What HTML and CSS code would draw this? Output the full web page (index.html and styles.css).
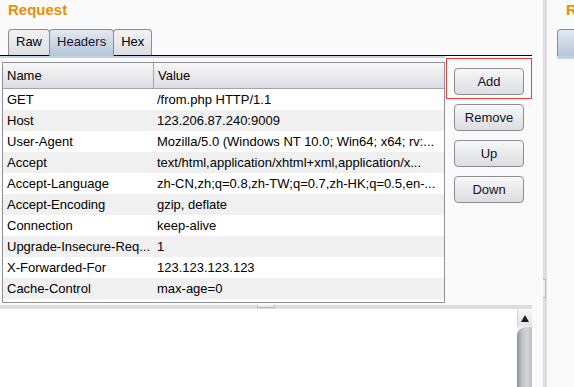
FILE: index.html
```html
<!DOCTYPE html>
<html lang="en">
<head>
    <meta charset="UTF-8">
    <title>Request headers</title>
    <link rel="stylesheet" href="styles.css">
</head>
<body>
    <div class="app">
        <section class="panel">
            <h2 class="panel-title">Request</h2>
            <div class="tabs">
                <span class="tab">Raw</span>
                <span class="tab active">Headers</span>
                <span class="tab">Hex</span>
            </div>
            <div class="tab-rule"></div>

            <div class="headers">
                <div class="grid">
                    <div class="grid-head"><span>Name</span><span>Value</span></div>
                    <div class="grid-row"><span>GET</span><span>/from.php HTTP/1.1</span></div>
                    <div class="grid-row"><span>Host</span><span>123.206.87.240:9009</span></div>
                    <div class="grid-row"><span>User-Agent</span><span>Mozilla/5.0 (Windows NT 10.0; Win64; x64; rv:...</span></div>
                    <div class="grid-row"><span>Accept</span><span>text/html,application/xhtml+xml,application/x...</span></div>
                    <div class="grid-row"><span>Accept-Language</span><span>zh-CN,zh;q=0.8,zh-TW;q=0.7,zh-HK;q=0.5,en-...</span></div>
                    <div class="grid-row"><span>Accept-Encoding</span><span>gzip, deflate</span></div>
                    <div class="grid-row"><span>Connection</span><span>keep-alive</span></div>
                    <div class="grid-row"><span>Upgrade-Insecure-Req...</span><span>1</span></div>
                    <div class="grid-row"><span>X-Forwarded-For</span><span>123.123.123.123</span></div>
                    <div class="grid-row"><span>Cache-Control</span><span>max-age=0</span></div>
                </div>

                <div class="actions">
                    <div class="focus-ring"><button type="button">Add</button></div>
                    <button type="button">Remove</button>
                    <button type="button">Up</button>
                    <button type="button">Down</button>
                </div>
            </div>

            <div class="hsplit"><span class="grip"></span></div>

            <div class="editor">
                <div class="scrollbar">
                    <span class="arrow"></span>
                    <span class="thumb"></span>
                </div>
            </div>
        </section>

        <div class="vsplit"><span class="grip"></span></div>

        <section class="panel side">
            <h2 class="panel-title">Response</h2>
            <div class="tabs">
                <span class="tab active">Raw</span>
            </div>
            <div class="tab-rule"></div>
        </section>
    </div>
</body>
</html>
```

FILE: styles.css
```css
body {
    margin: 0;
    background-color: #fafafa;
    font-family: 'Liberation Sans', Arial, sans-serif;
    font-size: 13px;
    color: #000;
    overflow: hidden;
}

.app {
    display: flex;
    height: 387px;
    width: 574px;
    overflow: hidden;
}

.panel {
    display: flex;
    flex-direction: column;
    width: 532px;
    flex-shrink: 0;
    margin-right: 11px;
}

.panel-title {
    margin: 0;
    height: 29px;
    padding: 1px 0 0 8px;
    box-sizing: border-box;
    font-size: 15px;
    line-height: 18px;
    font-weight: bold;
    color: #e8900c;
    white-space: nowrap;
}

/* Tab strip */
.tabs {
    display: flex;
    align-items: flex-end;
    height: 26px;
    padding-left: 8px;
}

.tab {
    height: 25px;
    line-height: 24px;
    padding: 0 7px;
    border: 1px solid #8a8c91;
    border-bottom: none;
    border-radius: 4px 4px 0 0;
    background: linear-gradient(#f3f3f4, #dcdde1);
    margin-right: -1px;
    white-space: nowrap;
}

.tab.active {
    background: linear-gradient(#e3e9f0, #b3c6d9);
    color: #1a0f2e;
    position: relative;
    z-index: 1;
    height: 26px;
    margin-bottom: -1px;
}

.tab-rule {
    height: 2px;
    border-top: 1px solid #000;
    background: linear-gradient(#c3d3e3, #c3d3e3) no-repeat;
    background-size: 445px 100%;
}

/* Headers table + buttons */
.headers {
    display: flex;
    align-items: flex-start;
    height: 245px;
}

.grid {
    width: 443px;
    margin: 4px 1px 0 2px;
    box-sizing: border-box;
    border: 1px solid #8e9096;
    background-color: #fff;
    padding-bottom: 3px;
}

.grid-head,
.grid-row {
    display: grid;
    grid-template-columns: 150px 1fr;
}

.grid-head {
    height: 26px;
    line-height: 25px;
    box-sizing: border-box;
    border-bottom: 1px solid #a3a4aa;
    background: linear-gradient(#f7f7f8, #dcdde2);
}

.grid-head span + span {
    border-left: 1px solid #a3a4aa;
}

.grid-row {
    height: 21px;
    line-height: 21px;
}

.grid-row:nth-child(odd) {
    background-color: #f0f0f0;
}

.grid span {
    padding-left: 4px;
    white-space: nowrap;
    overflow: hidden;
}

.actions {
    display: flex;
    flex-direction: column;
    width: 86px;
}

.focus-ring {
    border: 1px solid #ee3a3a;
    padding: 9px 7px 3px 7px;
    margin-bottom: 5px;
}

.actions button {
    width: 70px;
    height: 27px;
    margin: 0 0 9px 8px;
    padding: 0;
    border: 1px solid #8c8d92;
    border-radius: 4px;
    background: linear-gradient(#f7f7f8, #dcdde2);
    font-family: 'Liberation Sans', Arial, sans-serif;
    font-size: 13px;
    color: #10131c;
}

.focus-ring button {
    margin: 0;
}

/* Splitters */
.hsplit {
    display: flex;
    justify-content: center;
    height: 4px;
    margin-top: 2px;
    background-color: #dcdde3;
}

.hsplit .grip {
    width: 16px;
    height: 2px;
    border: 1px solid #b9bac0;
    border-top: none;
    background-color: #e8e9ed;
}

.vsplit {
    display: flex;
    width: 4px;
    flex-shrink: 0;
    background-color: #dcdde3;
}

.vsplit .grip {
    width: 2px;
    height: 17px;
    margin-top: 279px;
    border: 1px solid #b9bac0;
    border-left: none;
    background-color: #eeeef1;
}

/* Message editor */
.editor {
    flex: 1;
    display: flex;
    justify-content: flex-end;
    background-color: #fff;
}

.scrollbar {
    display: flex;
    flex-direction: column;
    width: 15px;
    margin-top: 1px;
    background-color: #f0f0f2;
}

.scrollbar .arrow {
    height: 16px;
    display: flex;
    justify-content: center;
    align-items: center;
    background: linear-gradient(#f4f4f5, #e2e3e6);
    border-left: 1px solid #d0d0d4;
}

.scrollbar .arrow::before {
    content: "";
    border-left: 4px solid transparent;
    border-right: 4px solid transparent;
    border-bottom: 7px solid #1c1c1c;
}

.scrollbar .thumb {
    flex: 1;
    margin-top: 1px;
    border-radius: 9px 0 0 0;
    background: linear-gradient(to right, #8f9094, #c3c4c8 35%, #d3d4d8 70%, #bdbec2);
}

/* Response side */
.side {
    width: auto;
    flex: 1;
    margin-right: 0;
    overflow: hidden;
}

.side .panel-title {
    padding-left: 19px;
}

.side .tabs {
    padding-left: 10px;
}

.side .tab {
    padding: 0 24px;
}

.side .tab-rule {
    border-top: none;
    height: 4px;
    background-size: 100% 100%;
    margin-left: 10px;
}
```
